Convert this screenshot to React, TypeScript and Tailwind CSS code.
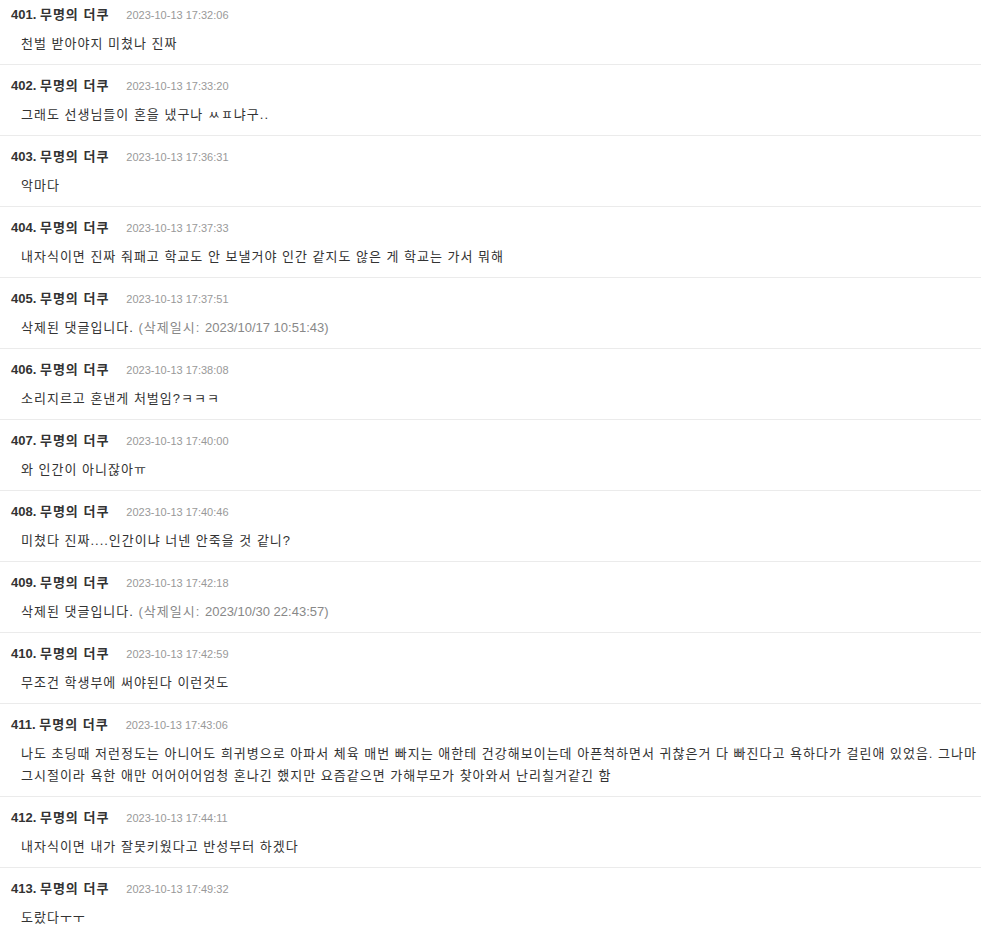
const comments: { no: number; date: string; text: string; deletedAt?: string }[] = [
  { no: 401, date: "2023-10-13 17:32:06", text: "천벌 받아야지 미쳤나 진짜" },
  { no: 402, date: "2023-10-13 17:33:20", text: "그래도 선생님들이 혼을 냈구나 ㅆㅍ냐구.." },
  { no: 403, date: "2023-10-13 17:36:31", text: "악마다" },
  {
    no: 404,
    date: "2023-10-13 17:37:33",
    text: "내자식이면 진짜 줘패고 학교도 안 보낼거야 인간 같지도 않은 게 학교는 가서 뭐해",
  },
  { no: 405, date: "2023-10-13 17:37:51", text: "삭제된 댓글입니다.", deletedAt: "2023/10/17 10:51:43" },
  { no: 406, date: "2023-10-13 17:38:08", text: "소리지르고 혼낸게 처벌임?ㅋㅋㅋ" },
  { no: 407, date: "2023-10-13 17:40:00", text: "와 인간이 아니잖아ㅠ" },
  { no: 408, date: "2023-10-13 17:40:46", text: "미쳤다 진짜....인간이냐 너넨 안죽을 것 같니?" },
  { no: 409, date: "2023-10-13 17:42:18", text: "삭제된 댓글입니다.", deletedAt: "2023/10/30 22:43:57" },
  { no: 410, date: "2023-10-13 17:42:59", text: "무조건 학생부에 써야된다 이런것도" },
  {
    no: 411,
    date: "2023-10-13 17:43:06",
    text: "나도 초딩때 저런정도는 아니어도 희귀병으로 아파서 체육 매번 빠지는 애한테 건강해보이는데 아픈척하면서 귀찮은거 다 빠진다고 욕하다가 걸린애 있었음. 그나마 그시절이라 욕한 애만 어어어어엄청 혼나긴 했지만 요즘같으면 가해부모가 찾아와서 난리칠거같긴 함",
  },
  { no: 412, date: "2023-10-13 17:44:11", text: "내자식이면 내가 잘못키웠다고 반성부터 하겠다" },
  { no: 413, date: "2023-10-13 17:49:32", text: "도랐다ㅜㅜ" },
];

export default function App() {
  return (
    <div className="w-[981px] bg-white font-['Liberation_Sans','Noto_Sans_CJK_KR',sans-serif] text-[#333]">
      <ul className="-mt-[6px]">
        {comments.map((c) => (
          <li key={c.no} className="border-b border-[#ebebeb] pt-[11px] pb-[9px]">
            <div className="flex h-[20px] items-center pl-[11px]">
              <span className="text-[13px] font-bold">
                {c.no}. <span className="tracking-[1px]">무명의 더쿠</span>
              </span>
              <span className="ml-[17px] text-[11px] text-[#999]">{c.date}</span>
            </div>
            <p className="mt-[8px] pl-[21px] pr-[2px] text-[13px] leading-[22px] tracking-[1px]">
              {c.text}
              {c.deletedAt && (
                <span className="text-[#888]">
                  {" "}
                  (삭제일시: <span className="tracking-normal">{c.deletedAt})</span>
                </span>
              )}
            </p>
          </li>
        ))}
      </ul>
    </div>
  );
}
